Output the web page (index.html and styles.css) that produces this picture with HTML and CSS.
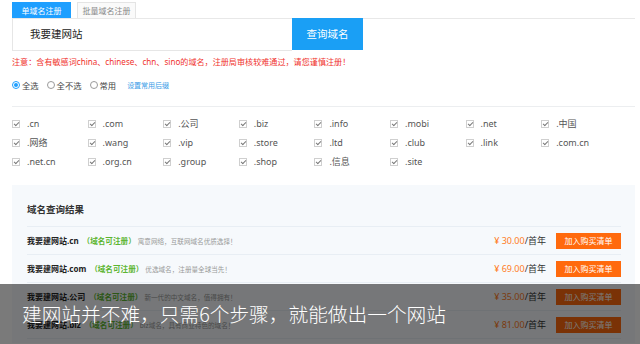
FILE: index.html
```html
<!DOCTYPE html>
<html lang="zh-CN">
<head>
<meta charset="utf-8">
<title>域名注册</title>
<link rel="stylesheet" href="styles.css">
</head>
<body>
<div class="page">
  <div class="tabs">
    <div class="tab active">单域名注册</div>
    <div class="tab">批量域名注册</div>
  </div>
  <div class="search">
    <div class="input">我要建网站</div>
    <div class="btn">查询域名</div>
  </div>
  <p class="notice">注意：含有敏感词china、chinese、chn、sino的域名，注册局审核较难通过，请您谨慎注册！</p>
  <div class="radios">
    <span class="radio on"></span><span class="rlabel">全选</span>
    <span class="radio"></span><span class="rlabel">全不选</span>
    <span class="radio"></span><span class="rlabel">常用</span>
    <span class="link">设置常用后缀</span>
  </div>
  <div class="grid">
    <div class="cb"><i></i>.cn</div>
    <div class="cb"><i></i>.com</div>
    <div class="cb"><i></i>.公司</div>
    <div class="cb"><i></i>.biz</div>
    <div class="cb"><i></i>.info</div>
    <div class="cb"><i></i>.mobi</div>
    <div class="cb"><i></i>.net</div>
    <div class="cb"><i></i>.中国</div>
    <div class="cb"><i></i>.网络</div>
    <div class="cb"><i></i>.wang</div>
    <div class="cb"><i></i>.vip</div>
    <div class="cb"><i></i>.store</div>
    <div class="cb"><i></i>.ltd</div>
    <div class="cb"><i></i>.club</div>
    <div class="cb"><i></i>.link</div>
    <div class="cb"><i></i>.com.cn</div>
    <div class="cb"><i></i>.net.cn</div>
    <div class="cb"><i></i>.org.cn</div>
    <div class="cb"><i></i>.group</div>
    <div class="cb"><i></i>.shop</div>
    <div class="cb"><i></i>.信息</div>
    <div class="cb"><i></i>.site</div>
  </div>
  <div class="results">
    <div class="rtitle">域名查询结果</div>
    <div class="row">
      <span class="dn">我要建网站.cn</span><span class="ok">（域名可注册）</span><span class="desc">寓意网络，互联网域名优质选择！</span>
      <span class="price"><em>¥ 30.00</em>/首年</span><span class="buy">加入购买清单</span>
    </div>
    <div class="row">
      <span class="dn">我要建网站.com</span><span class="ok">（域名可注册）</span><span class="desc">优选域名，注册量全球当先！</span>
      <span class="price"><em>¥ 69.00</em>/首年</span><span class="buy">加入购买清单</span>
    </div>
    <div class="row">
      <span class="dn">我要建网站.公司</span><span class="ok">（域名可注册）</span><span class="desc">新一代的中文域名，值得拥有！</span>
      <span class="price"><em>¥ 35.00</em>/首年</span><span class="buy">加入购买清单</span>
    </div>
    <div class="row">
      <span class="dn">我要建网站.biz</span><span class="ok">（域名可注册）</span><span class="desc">biz域名，具有商业特色的域名！</span>
      <span class="price"><em>¥ 81.00</em>/首年</span><span class="buy">加入购买清单</span>
    </div>
  </div>
</div>
<div class="caption">建网站并不难，只需6个步骤，就能做出一个网站</div>
</body>
</html>
```

FILE: styles.css
```css
* { box-sizing: border-box; }
html, body { margin: 0; padding: 0; background: #fff; }
body {
  width: 640px; height: 344px; overflow: hidden; position: relative;
  font-family: "Noto Sans", "Noto Sans CJK SC", sans-serif;
  color: #333;
}
.page { padding: 2px 5px 0 12px; }
.tabs { display: flex; gap: 6px; height: 16px; }
.tab {
  width: 59px; height: 16px; font-size: 8px; line-height: 15px; text-align: center;
  color: #888; background: #fafafa; border: 1px solid #e4e4e4; border-bottom: none;
}
.tab.active { background: #1e9fff; color: #fff; border-color: #1e9fff; }
.search { display: flex; border-top: 1px solid #e8e8e8; height: 32px; }
.input {
  width: 280px; height: 32px; border-left: 1px solid #e6e6e6; border-bottom: 1px solid #e6e6e6;
  font-size: 10.5px; line-height: 30px; padding-left: 17px; color: #222;
}
.btn {
  width: 71px; height: 32px; margin-top: -1px; background: #1a9ff5; color: #fff;
  font-size: 10.5px; line-height: 33px; text-align: center;
}
.notice { margin: 6px 0 0; font-size: 8.1px; line-height: 12px; color: #f0322d; }
.radios { display: flex; align-items: center; height: 12px; margin-top: 11px; font-size: 8.3px; color: #444; }
.radio { width: 8px; height: 8px; border: 1px solid #9a9a9a; border-radius: 50%; margin-right: 2px; position: relative; }
.radio.on { border-color: #1e9fff; }
.radio.on::after { content: ""; position: absolute; left: 1px; top: 1px; width: 4px; height: 4px; border-radius: 50%; background: #1e9fff; }
.rlabel { margin-right: 8px; }
.link { font-size: 7px; color: #3a9be6; margin-left: 3px; }
.grid {
  border-top: 1px solid #eceef0; margin-top: 15px; width: 623px; padding-top: 7px;
  display: grid; grid-template-columns: repeat(8, 75.6px); grid-auto-rows: 19px;
}
.cb { display: flex; align-items: center; font-size: 9px; color: #555; }
.cb i {
  width: 8px; height: 8px; border: 1px solid #cfcfcf; margin-right: 7px; position: relative; display: block;
}
.cb i::after {
  content: ""; position: absolute; left: 2px; top: 0px; width: 2px; height: 4px;
  border-right: 1px solid #7a7a7a; border-bottom: 1px solid #7a7a7a; transform: rotate(45deg);
}
.results {
  margin-top: 14px; width: 623px; background: #f6f9fc; padding: 18px 14px 0 15px; height: 158px; overflow: hidden;
}
.rtitle { font-size: 9.5px; font-weight: bold; line-height: 14px; color: #333; padding-bottom: 9px; border-bottom: 1px solid #e8eef4; }
.row { display: flex; align-items: center; height: 28px; border-bottom: 1px solid #e8eef4; }
.dn { font-size: 8px; font-weight: bold; color: #222; }
.ok { font-size: 7.6px; font-weight: bold; color: #5cb531; margin-left: 4px; }
.desc { font-size: 6.6px; color: #999; margin-left: 2px; }
.price { margin-left: auto; font-size: 9px; color: #333; margin-right: 10px; }
.price em { font-style: normal; color: #ff7d26; }
.buy { width: 65px; height: 16px; background: #ff6a0d; color: #fff; font-size: 8px; line-height: 16px; text-align: center; }
.caption {
  position: absolute; left: 0; bottom: 0; width: 640px; height: 60px;
  background: rgba(0, 0, 0, 0.52); color: #fff; font-size: 19.7px; font-weight: 300;
  line-height: 60px; padding-left: 22px;
  font-family: "Noto Sans CJK SC", sans-serif;
}
```
